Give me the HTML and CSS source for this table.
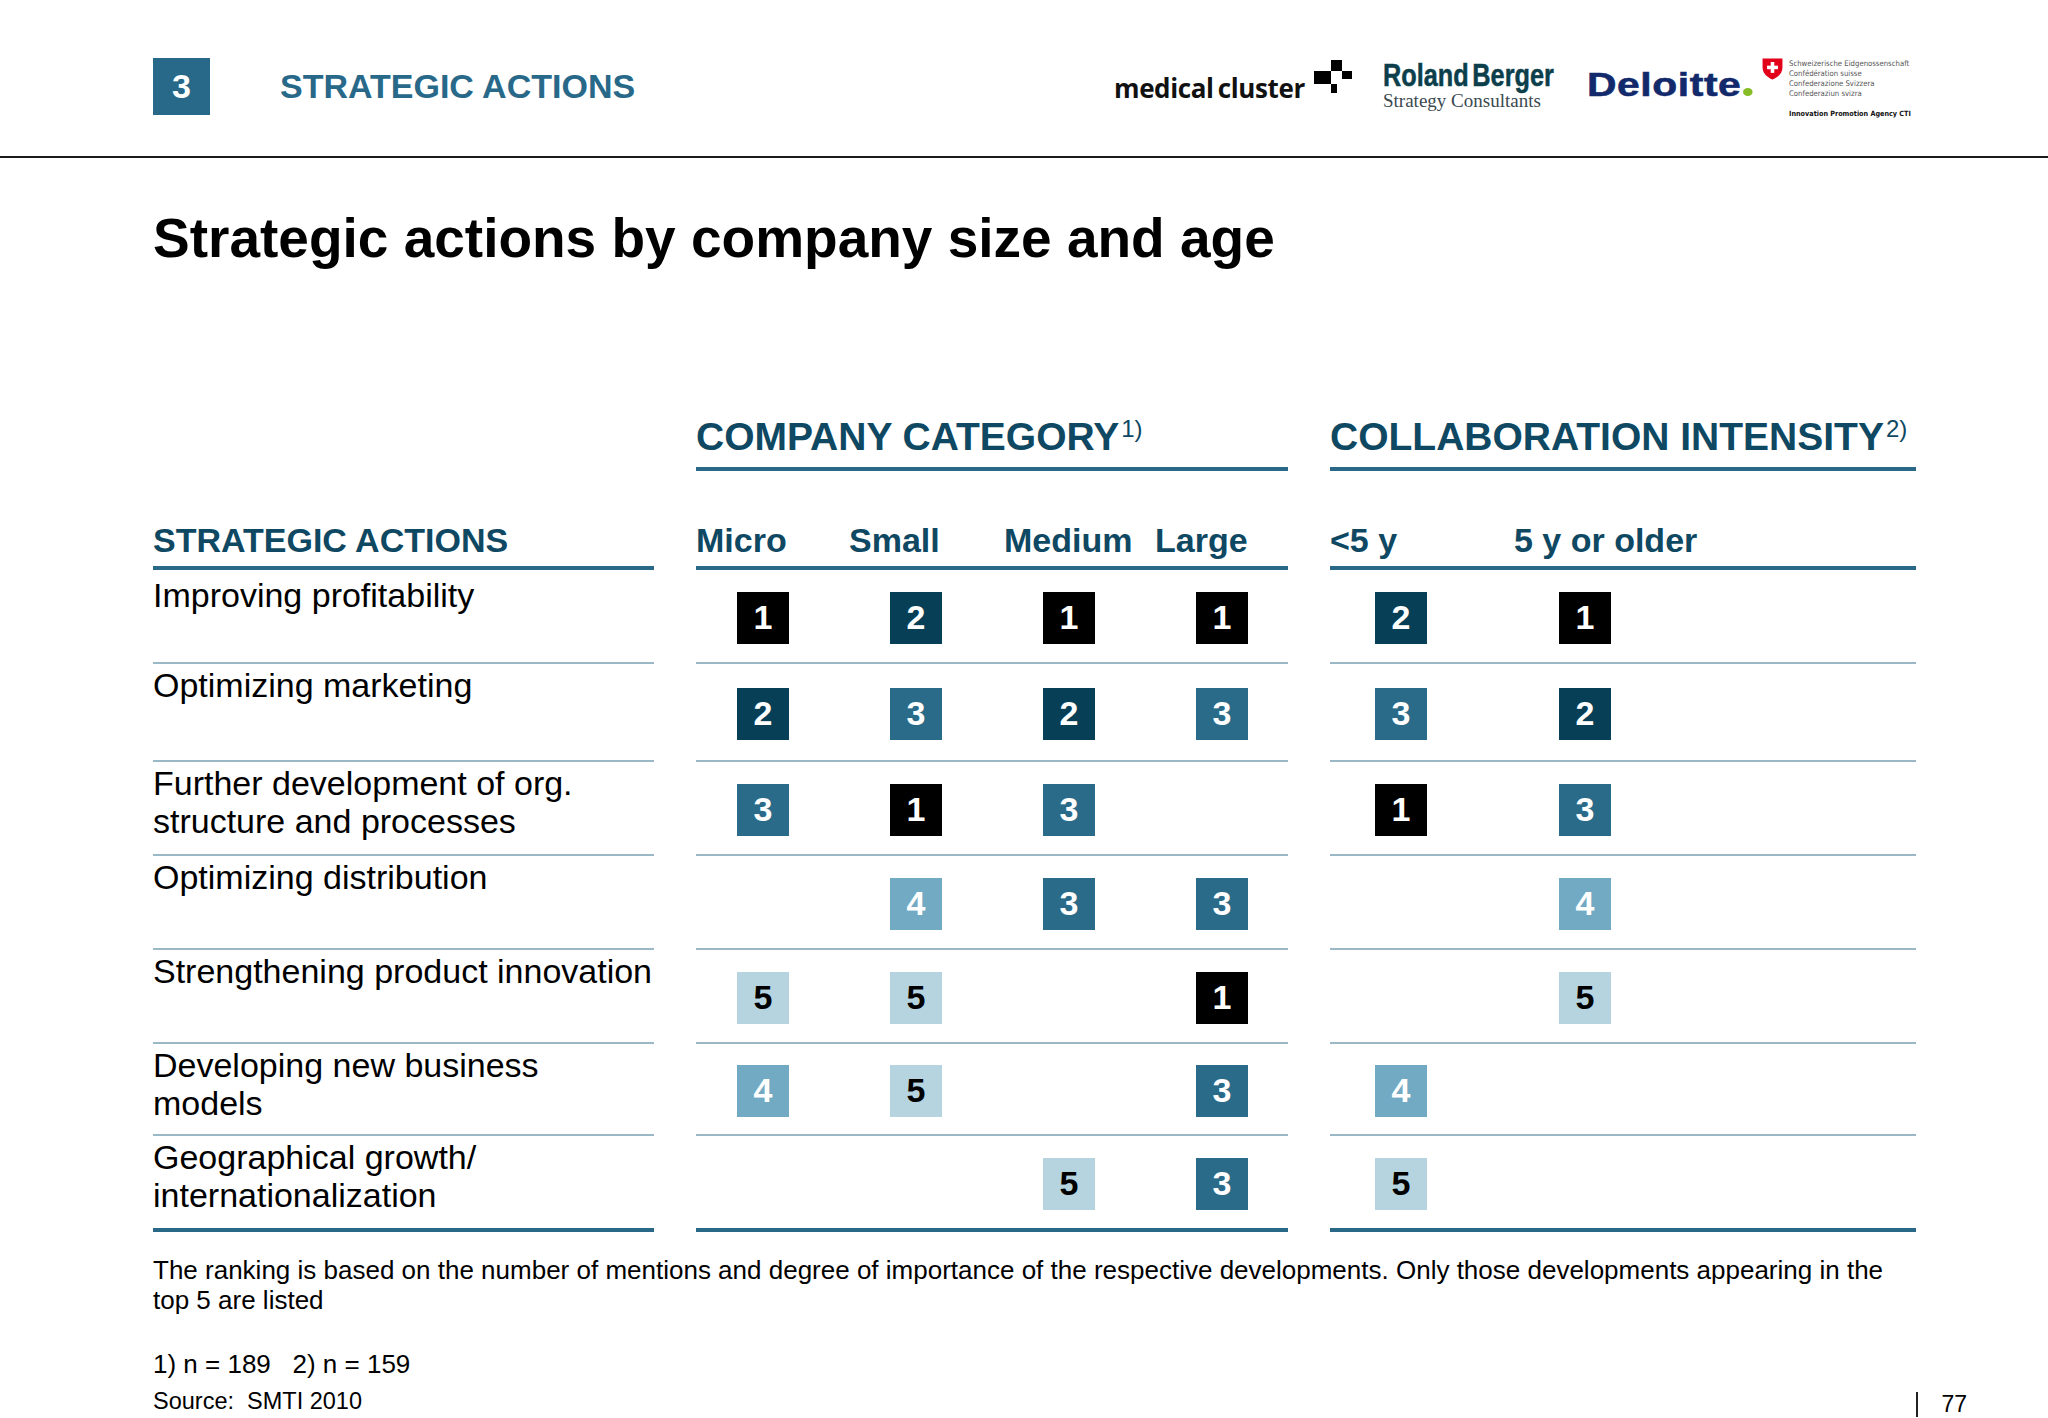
FILE: index.html
```html
<!DOCTYPE html>
<html lang="en">
<head>
<meta charset="utf-8">
<title>Strategic actions by company size and age</title>
<link rel="stylesheet" href="styles.css">
</head>
<body>
<div class="slide">
  <header class="topbar">
    <div class="section">
      <span class="section-num">3</span>
      <span class="section-title">STRATEGIC ACTIONS</span>
    </div>
    <div class="logos">
      <div class="logo-medical">
        <span class="mc-text">medical cluster</span>
        <svg class="mc-icon" width="38" height="36" viewBox="0 0 38 36" aria-hidden="true">
          <rect x="17" y="1" width="11" height="11" fill="#000"/>
          <rect x="0" y="12" width="17" height="13" fill="#000"/>
          <rect x="28" y="12" width="10" height="8" fill="#000"/>
          <rect x="17" y="25" width="6" height="9" fill="#000"/>
        </svg>
      </div>
      <div class="logo-rb">
        <div class="rb-name">Roland Berger</div>
        <div class="rb-sub">Strategy Consultants</div>
      </div>
      <div class="logo-deloitte"><span class="dl-text">Deloitte<span class="dl-dot"></span></span></div>
      <div class="logo-swiss">
        <svg class="swiss-flag" width="21" height="22" viewBox="0 0 20 21" aria-hidden="true">
          <path d="M0.5 0.5 H19.5 V9 C19.5 14.5 15 18.5 10 20.5 C5 18.5 0.5 14.5 0.5 9 Z" fill="#e2001a"/>
          <rect x="8.3" y="3.8" width="3.4" height="10.4" fill="#fff"/>
          <rect x="4.8" y="7.3" width="10.4" height="3.4" fill="#fff"/>
        </svg>
        <div class="swiss-text">
          <span>Schweizerische Eidgenossenschaft</span>
          <span>Confédération suisse</span>
          <span>Confederazione Svizzera</span>
          <span>Confederaziun svizra</span>
          <span class="cti">Innovation Promotion Agency CTI</span>
        </div>
      </div>
    </div>
  </header>

  <main class="content">
    <h1 class="title">Strategic actions by company size and age</h1>

    <div class="matrix">
      <div class="mrow group-row">
        <div></div>
        <div class="group-head">COMPANY CATEGORY<sup>1)</sup></div>
        <div class="group-head">COLLABORATION INTENSITY<sup>2)</sup></div>
      </div>

      <div class="mrow col-row">
        <div class="col-head">STRATEGIC ACTIONS</div>
        <div class="col-head sub4"><span>Micro</span><span>Small</span><span>Medium</span><span>Large</span></div>
        <div class="col-head sub2"><span>&lt;5 y</span><span>5 y or older</span></div>
      </div>

      <div class="mrow data-row first">
        <div class="action">Improving profitability</div>
        <div class="ranks sub4">
          <span class="slot"><b class="rank r1">1</b></span>
          <span class="slot"><b class="rank r2">2</b></span>
          <span class="slot"><b class="rank r1">1</b></span>
          <span class="slot"><b class="rank r1">1</b></span>
        </div>
        <div class="ranks sub2">
          <span class="slot"><b class="rank r2">2</b></span>
          <span class="slot"><b class="rank r1">1</b></span>
        </div>
      </div>

      <div class="mrow data-row tall">
        <div class="action">Optimizing marketing</div>
        <div class="ranks sub4">
          <span class="slot"><b class="rank r2">2</b></span>
          <span class="slot"><b class="rank r3">3</b></span>
          <span class="slot"><b class="rank r2">2</b></span>
          <span class="slot"><b class="rank r3">3</b></span>
        </div>
        <div class="ranks sub2">
          <span class="slot"><b class="rank r3">3</b></span>
          <span class="slot"><b class="rank r2">2</b></span>
        </div>
      </div>

      <div class="mrow data-row">
        <div class="action">Further development of org.<br>structure and processes</div>
        <div class="ranks sub4">
          <span class="slot"><b class="rank r3">3</b></span>
          <span class="slot"><b class="rank r1">1</b></span>
          <span class="slot"><b class="rank r3">3</b></span>
          <span class="slot"></span>
        </div>
        <div class="ranks sub2">
          <span class="slot"><b class="rank r1">1</b></span>
          <span class="slot"><b class="rank r3">3</b></span>
        </div>
      </div>

      <div class="mrow data-row">
        <div class="action">Optimizing distribution</div>
        <div class="ranks sub4">
          <span class="slot"></span>
          <span class="slot"><b class="rank r4">4</b></span>
          <span class="slot"><b class="rank r3">3</b></span>
          <span class="slot"><b class="rank r3">3</b></span>
        </div>
        <div class="ranks sub2">
          <span class="slot"></span>
          <span class="slot"><b class="rank r4">4</b></span>
        </div>
      </div>

      <div class="mrow data-row">
        <div class="action">Strengthening product innovation</div>
        <div class="ranks sub4">
          <span class="slot"><b class="rank r5">5</b></span>
          <span class="slot"><b class="rank r5">5</b></span>
          <span class="slot"></span>
          <span class="slot"><b class="rank r1">1</b></span>
        </div>
        <div class="ranks sub2">
          <span class="slot"></span>
          <span class="slot"><b class="rank r5">5</b></span>
        </div>
      </div>

      <div class="mrow data-row short">
        <div class="action">Developing new business<br>models</div>
        <div class="ranks sub4">
          <span class="slot"><b class="rank r4">4</b></span>
          <span class="slot"><b class="rank r5">5</b></span>
          <span class="slot"></span>
          <span class="slot"><b class="rank r3">3</b></span>
        </div>
        <div class="ranks sub2">
          <span class="slot"><b class="rank r4">4</b></span>
          <span class="slot"></span>
        </div>
      </div>

      <div class="mrow data-row last">
        <div class="action">Geographical growth/<br>internationalization</div>
        <div class="ranks sub4">
          <span class="slot"></span>
          <span class="slot"></span>
          <span class="slot"><b class="rank r5">5</b></span>
          <span class="slot"><b class="rank r3">3</b></span>
        </div>
        <div class="ranks sub2">
          <span class="slot"><b class="rank r5">5</b></span>
          <span class="slot"></span>
        </div>
      </div>
    </div>

    <footer class="notes">
      <p class="note">The ranking is based on the number of mentions and degree of importance of the respective developments. Only those developments appearing in the top 5 are listed</p>
      <p class="sample">1) n = 189&nbsp;&nbsp; 2) n = 159</p>
      <div class="source-row">
        <p class="source">Source:&nbsp; SMTI 2010</p>
        <span class="pageno">77</span>
      </div>
    </footer>
  </main>
</div>
</body>
</html>
```

FILE: styles.css
```css
* {
  box-sizing: border-box;
}

html, body {
  margin: 0;
  padding: 0;
  background: #ffffff;
}

body {
  width: 2048px;
  height: 1418px;
  overflow: hidden;
  font-family: "Liberation Sans", Arial, sans-serif;
  color: #000;
}

.slide {
  width: 2048px;
  height: 1418px;
}

/* ---------- top bar ---------- */
.topbar {
  display: flex;
  align-items: flex-start;
  height: 158px;
  padding: 58px 113px 0 153px;
  border-bottom: 2px solid #1c1c1c;
}

.section {
  display: flex;
  align-items: center;
  gap: 70px;
}

.section-num {
  width: 57px;
  height: 57px;
  display: flex;
  align-items: center;
  justify-content: center;
  background: #28698a;
  color: #fff;
  font-weight: 700;
  font-size: 34px;
}

.section-title {
  color: #28698a;
  font-weight: 700;
  font-size: 34px;
  line-height: 39px;
}

.logos {
  margin-left: auto;
  display: flex;
  align-items: flex-start;
}

.logo-medical {
  width: 238px;
  margin-top: 1px;
  display: flex;
  justify-content: space-between;
  align-items: flex-start;
}

.mc-text {
  margin-top: 14px;
  font-family: "Open Sans", sans-serif;
  font-weight: 700;
  font-size: 26px;
  line-height: 30px;
  letter-spacing: -0.4px;
  word-spacing: -2px;
  color: #111;
  white-space: nowrap;
}

.mc-icon {
  display: block;
}

.logo-rb {
  width: 171px;
  margin-left: 31px;
  margin-top: 4px;
}

.rb-name {
  font-weight: 700;
  font-size: 31px;
  line-height: 28px;
  word-spacing: -4px;
  color: #0c3f4b;
  -webkit-text-stroke: 0.5px #0c3f4b;
  white-space: nowrap;
  transform: scale(0.815, 1.04);
  transform-origin: left center;
}

.rb-sub {
  margin-top: 4px;
  font-family: "Liberation Serif", "Times New Roman", serif;
  font-size: 19px;
  line-height: 14px;
  color: #3b4a4f;
  white-space: nowrap;
}

.logo-deloitte {
  width: 162px;
  margin-left: 33px;
  margin-top: 8px;
}

.dl-text {
  display: inline-block;
  font-weight: 700;
  font-size: 34px;
  line-height: 36px;
  letter-spacing: 0.5px;
  color: #12296b;
  -webkit-text-stroke: 0.6px #12296b;
  white-space: nowrap;
  transform: scaleX(1.2);
  transform-origin: left center;
}

.dl-dot {
  display: inline-block;
  width: 8px;
  height: 8px;
  margin-left: 1px;
  border-radius: 50%;
  background: #86bc25;
}

.logo-swiss {
  width: 173px;
  margin-left: 13px;
  margin-top: 0;
  display: flex;
  align-items: flex-start;
  gap: 6px;
}

.swiss-flag {
  display: block;
  flex: none;
}

.swiss-text {
  display: flex;
  flex-direction: column;
  padding-top: 1px;
  font-family: "DejaVu Sans Condensed", "DejaVu Sans", sans-serif;
  font-size: 7.7px;
  line-height: 10px;
  color: #555;
  white-space: nowrap;
}

.swiss-text .cti {
  margin-top: 10px;
  font-size: 7.2px;
  font-weight: 700;
  color: #111;
}

/* ---------- content ---------- */
.content {
  padding: 0 132px 0 153px;
}

.title {
  margin: 48px 0 0;
  font-size: 55px;
  line-height: 64px;
  font-weight: 700;
}

.matrix {
  margin-top: 145px;
}

.mrow {
  display: grid;
  grid-template-columns: 501px 592px 586px;
  column-gap: 42px;
}

.group-head {
  font-size: 39px;
  line-height: 44px;
  font-weight: 700;
  color: #0f4862;
  padding-bottom: 8px;
  border-bottom: 4px solid #2a6887;
  white-space: nowrap;
}

.group-head sup {
  font-size: 24px;
  font-weight: 400;
  line-height: 0;
  vertical-align: 13px;
  margin-left: 2px;
}

.col-row {
  margin-top: 50px;
}

.col-head {
  font-size: 34px;
  line-height: 38px;
  font-weight: 700;
  color: #0f4862;
  padding-bottom: 7px;
  border-bottom: 4px solid #2a6887;
  white-space: nowrap;
}

.sub4 {
  display: grid;
  grid-template-columns: 153px 153px 153px 1fr;
}

.sub2 {
  display: grid;
  grid-template-columns: 184px 1fr;
}

.col-head.sub4 > span:nth-child(3) {
  margin-left: 2px;
}

.data-row > * {
  height: 94px;
  border-bottom: 2px solid #9bb8c6;
}

.data-row.tall > * {
  height: 98px;
}

.data-row.short > * {
  height: 92px;
}

.data-row.last > * {
  height: 96px;
  border-bottom: 4px solid #2a6887;
}

.action {
  padding-top: 2px;
  font-size: 34px;
  line-height: 38px;
}

.data-row.first .action {
  padding-top: 6px;
}

.ranks {
  align-items: center;
  padding-top: 3px;
}

.slot {
  display: flex;
  align-items: center;
  padding-left: 41px;
}

.sub2 .slot {
  padding-left: 45px;
}

.rank {
  width: 52px;
  height: 52px;
  display: flex;
  align-items: center;
  justify-content: center;
  font-size: 34px;
  font-weight: 700;
  color: #fff;
}

.r1 { background: #000000; }
.r2 { background: #073f57; }
.r3 { background: #2b6b8a; }
.r4 { background: #72aac3; }
.r5 { background: #b6d4e0; color: #000; }

/* ---------- notes ---------- */
.notes {
  font-size: 26px;
  line-height: 30px;
}

.notes p {
  margin: 0;
}

.notes .note {
  margin-top: 23px;
  width: 1763px;
}

.notes .sample {
  margin-top: 34px;
}

.source-row {
  display: flex;
  justify-content: space-between;
  align-items: flex-end;
  margin-top: 7px;
}

.source {
  font-size: 23.5px;
}

.pageno {
  height: 25px;
  font-size: 23px;
  line-height: 25px;
  padding-left: 23px;
  border-left: 2px solid #222;
  margin-right: -51px;
  margin-bottom: -1px;
}
```
